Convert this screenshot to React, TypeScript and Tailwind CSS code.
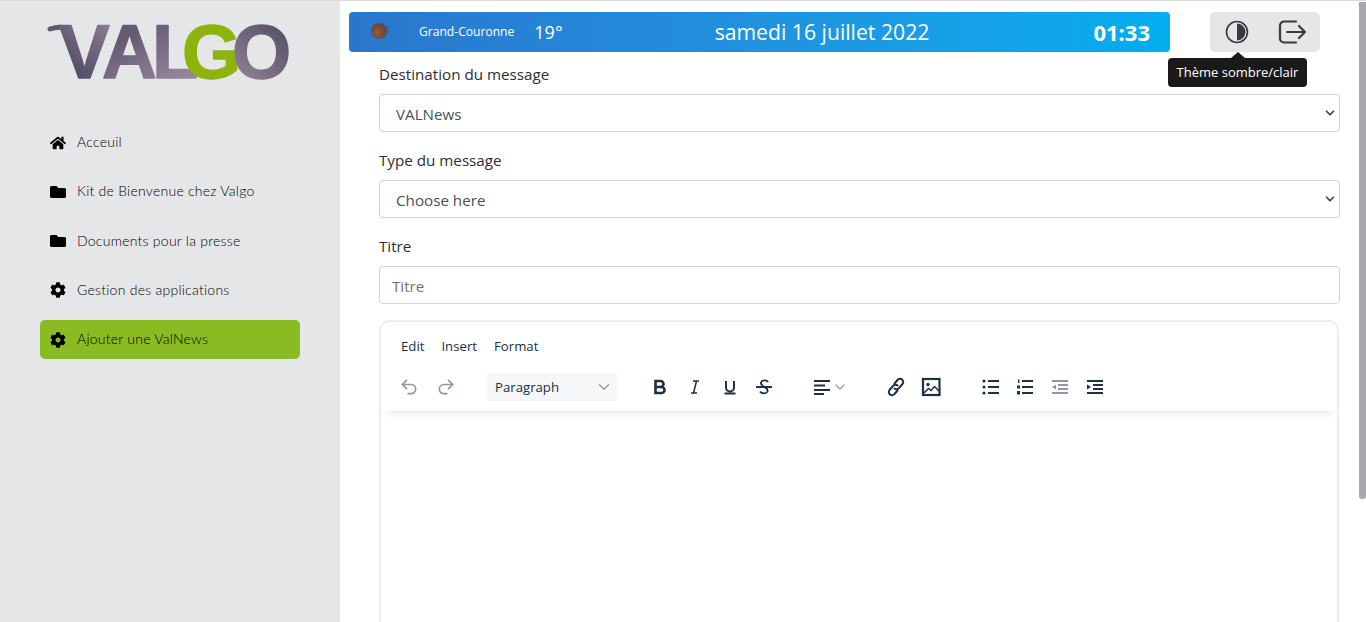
import { ChevronDown, Redo2, Undo2 } from "lucide-react";
import { FaCog, FaFolder, FaHome } from "react-icons/fa";
import type { ReactNode } from "react";

const menu = [
    { label: "Acceuil", icon: <FaHome size={16} /> },
    { label: "Kit de Bienvenue chez Valgo", icon: <FaFolder size={16} /> },
    { label: "Documents pour la presse", icon: <FaFolder size={16} /> },
    { label: "Gestion des applications", icon: <FaCog size={16} /> },
    { label: "Ajouter une ValNews", icon: <FaCog size={16} />, active: true },
];

function Logo() {
    return (
        <svg width="250" height="62" viewBox="0 0 250 62" className="ml-[47px] mt-[21px] overflow-visible">
            <defs>
                <linearGradient id="logoV" gradientUnits="userSpaceOnUse" x1="20" y1="58" x2="70" y2="4">
                    <stop offset="0" stopColor="#4b4660" />
                    <stop offset="1" stopColor="#8d7f93" />
                </linearGradient>
                <linearGradient id="logoL" gradientUnits="userSpaceOnUse" x1="100" y1="4" x2="130" y2="58">
                    <stop offset="0" stopColor="#655c74" />
                    <stop offset="1" stopColor="#94859a" />
                </linearGradient>
                <linearGradient id="logoO" gradientUnits="userSpaceOnUse" x1="195" y1="58" x2="242" y2="6">
                    <stop offset="0" stopColor="#8d7f93" />
                    <stop offset="1" stopColor="#544e66" />
                </linearGradient>
            </defs>
            <path d="M3 7C12 4 20 4 24 12" fill="none" stroke="#5f576f" strokeWidth="5" strokeLinecap="round" />
            <text
                y="56"
                fontFamily="'Liberation Sans', sans-serif"
                fontWeight="700"
                fontSize="76"
                strokeWidth="1.5"
                strokeLinejoin="round"
            >
                <tspan x="12" fill="url(#logoV)" stroke="url(#logoV)">V</tspan>
                <tspan x="55" fill="url(#logoL)" stroke="url(#logoL)">A</tspan>
                <tspan x="105" fill="url(#logoL)" stroke="url(#logoL)">L</tspan>
                <tspan x="135" fill="#8fb30e" stroke="#8fb30e">G</tspan>
                <tspan x="185" fill="url(#logoO)" stroke="url(#logoO)">O</tspan>
            </text>
        </svg>
    );
}

function Sidebar() {
    return (
        <aside className="flex h-full w-[340px] shrink-0 flex-col bg-[#e5e6e8]">
            <Logo />
            <nav className="mt-[39px] flex flex-col gap-[10.25px] px-[40px] font-['Lato',sans-serif] text-[14px] font-light text-black">
                {menu.map((item) => (
                    <div
                        key={item.label}
                        className={`flex h-[39px] items-center gap-[11px] rounded-[5px] pl-[10px] ${item.active ? "bg-[#8abb22]" : ""}`}
                    >
                        <span className="flex w-[16px] justify-center text-black">{item.icon}</span>
                        <span className="pb-[2px] tracking-[0.25px]">{item.label}</span>
                    </div>
                ))}
            </nav>
        </aside>
    );
}

function WeatherIcon() {
    return (
        <svg width="24" height="20" viewBox="0 0 24 20" className="mb-[3px]">
            <defs>
                <radialGradient id="ball" cx="0.4" cy="0.6" r="0.65">
                    <stop offset="0" stopColor="#8f5c3a" />
                    <stop offset="1" stopColor="#5c4436" />
                </radialGradient>
            </defs>
            <circle cx="10" cy="10" r="8" fill="url(#ball)" />
            <circle cx="18.500" cy="6" r="1" fill="#5a3f30" opacity="0.7" />
            <circle cx="19" cy="11" r="1" fill="#5a3f30" opacity="0.5" />
        </svg>
    );
}

function TopBar() {
    return (
        <div className="flex items-start pl-[9px] pt-[11px]">
            <div className="flex h-[40px] w-[821px] items-center rounded-[4px] bg-gradient-to-r from-[#2a76cd] to-[#03aeef] text-white">
                <div className="ml-[20px] w-[50px]">
                    <WeatherIcon />
                </div>
                <span className="text-[12.1px]">Grand-Couronne</span>
                <span className="ml-[20px] text-[18px]">19°</span>
                <span className="ml-[152px] text-[21.2px]">samedi 16 juillet 2022</span>
                <span className="ml-auto mr-[20px] text-[22px] font-bold">01:33</span>
            </div>
            <div className="relative ml-[40px] flex h-[40px] w-[110px] items-center rounded-[5px] bg-[#e5e6e8] text-[#3a3a3e]">
                <svg width="24" height="24" viewBox="0 0 24 24" className="ml-[15px]">
                    <circle cx="12" cy="12" r="10.5" fill="none" stroke="currentColor" strokeWidth="1.6" />
                    <path d="M12 3.500a8.500 8.500 0 0 1 0 17z" fill="currentColor" />
                </svg>
                <svg width="30" height="26" viewBox="0 0 30 26" className="ml-[29px]" fill="none" stroke="currentColor" strokeWidth="2.2" strokeLinecap="round" strokeLinejoin="round">
                    <path d="M18 2.500H6a4 4 0 0 0-4 4v13a4 4 0 0 0 4 4h12" />
                    <path d="M9 13h18M21 7l6 6-6 6" />
                </svg>
                <div className="absolute left-[-42px] top-[46px] flex h-[29px] w-[139px] items-center justify-center rounded-[4px] bg-[#1a1a1a] text-[13px] text-white">
                    <span className="absolute left-[63px] top-[-6px] h-0 w-0 border-x-[7px] border-b-[6px] border-x-transparent border-b-[#1a1a1a]" />
                    Thème sombre/clair
                </div>
            </div>
        </div>
    );
}

function Field({ label, children }: { label: string; children: ReactNode }) {
    return (
        <div className="flex flex-col">
            <label className="mb-[8px] h-[24px] text-[15.2px] leading-[24px] text-[#2a2e33]">{label}</label>
            {children}
        </div>
    );
}

function SelectBox({ value }: { value: string }) {
    return (
        <div className="relative">
            <select
                defaultValue={value}
                className="h-[38px] w-full appearance-none rounded-[4px] border border-[#ced4da] bg-white pl-[16px] pt-[2px] text-[15.2px] text-[#495057]"
            >
                <option>{value}</option>
            </select>
            <ChevronDown size={14} strokeWidth={3} className="absolute right-[3px] top-[12px] text-[#444]" />
        </div>
    );
}

const ink = "#222f3e";

function ListLines({ muted }: { muted?: boolean }) {
    const fill = muted ? "#9097a0" : ink;
    return (
        <>
            <rect x="6" y="1" width="11" height="2" fill={fill} />
            <rect x="6" y="7" width="11" height="2" fill={fill} />
            <rect x="6" y="13" width="11" height="2" fill={fill} />
        </>
    );
}

function EditorToolbar() {
    return (
        <div className="relative z-10 h-[89px] rounded-t-[8px] shadow-[0_7px_7px_-5px_rgba(34,47,62,0.12)]">
            <div className="flex gap-[17px] pl-[20px] pt-[14px] text-[13.2px] leading-[20px] text-[#222f3e]">
                <span>Edit</span>
                <span>Insert</span>
                <span>Format</span>
            </div>
            <div className="mt-[17px] flex h-[28px] items-center pl-[18px]" style={{ color: ink }}>
                <Undo2 size={20} strokeWidth={2} className="text-[#91979f]" />
                <Redo2 size={20} strokeWidth={2} className="ml-[17px] text-[#91979f]" />
                <div className="ml-[31px] flex h-[28px] w-[130px] items-center justify-between rounded-[3px] bg-[#f5f6f7] pl-[8px] pr-[4px] pt-[2px] text-[13.2px]">
                    Paragraph
                    <ChevronDown size={18} strokeWidth={1.6} className="mb-[2px] text-[#91979f]" />
                </div>
                {/* B I U S */}
                <svg width="16" height="16" viewBox="0 0 16 16" className="ml-[35px]" fill="none" stroke={ink} strokeWidth="2.6">
                    <path d="M3.500 2h5a3 3 0 0 1 0 6h-5zM3.500 8h6a3 3 0 0 1 0 6h-6z" />
                </svg>
                <svg width="16" height="16" viewBox="0 0 16 16" className="ml-[19px]" fill="none" stroke={ink} strokeWidth="1.5">
                    <path d="M6 2h6M4 14h6M9.500 2 6.500 14" />
                </svg>
                <svg width="16" height="16" viewBox="0 0 16 16" className="ml-[19px]" fill="none" stroke={ink} strokeWidth="2">
                    <path d="M4 2v6.500a4 4 0 0 0 8 0V2M2.500 14.500h11" />
                </svg>
                <svg width="18" height="18" viewBox="0 0 18 18" className="ml-[17px]" fill="none" stroke={ink} strokeWidth="1.9">
                    <path d="M13 4c-1-2-6-2.500-7 .5-.7 2.500 2 3.500 3.500 4.500 2 1 3.500 2 3 4.500-1 2.500-6 2.500-7.500 0M1 9h16" />
                </svg>
                <div className="ml-[41px] flex items-center">
                    <svg width="18" height="16" viewBox="0 0 18 16" fill={ink}>
                        <rect x="0" y="1" width="16" height="2" />
                        <rect x="0" y="5.500" width="11" height="2" />
                        <rect x="0" y="10" width="16" height="2" />
                        <rect x="0" y="14" width="10" height="2" />
                    </svg>
                    <ChevronDown size={16} strokeWidth={1.8} className="text-[#91979f]" />
                </div>
                <svg width="20" height="20" viewBox="0 0 20 20" className="ml-[38px]" fill="none" stroke={ink} strokeWidth="2" strokeLinecap="round">
                    <path d="M8.500 6.500 11.500 3a3.200 3.200 0 0 1 5 4l-3.500 4a3 3 0 0 1-4.500.5" />
                    <path d="M11.500 13.500 8.500 17a3.200 3.200 0 0 1-5-4L7 9a3 3 0 0 1 4.500-.5" />
                </svg>
                <svg width="20" height="20" viewBox="0 0 20 20" className="ml-[15px]" fill="none" stroke={ink}>
                    <rect x="2" y="2" width="16.500" height="16" strokeWidth="2.200" />
                    <circle cx="7" cy="7.500" r="1.700" fill={ink} stroke="none" />
                    <path d="M3 16 7.500 11.500 10 13.500 13.500 9.500 18 14" strokeWidth="1.500" />
                </svg>
                <svg width="18" height="16" viewBox="0 0 18 16" className="ml-[41px]" fill={ink}>
                    <circle cx="2" cy="2" r="1.600" />
                    <circle cx="2" cy="8" r="1.600" />
                    <circle cx="2" cy="14" r="1.600" />
                    <ListLines />
                </svg>
                <svg width="18" height="16" viewBox="0 0 18 16" className="ml-[16px]" fill={ink}>
                    <rect x="2" y="0.500" width="1.400" height="3.500" />
                    <rect x="1" y="6.500" width="3" height="3" />
                    <rect x="1" y="12" width="3" height="3.500" />
                    <ListLines />
                </svg>
                <svg width="18" height="16" viewBox="0 0 18 16" className="ml-[17px]" fill="#9097a0">
                    <rect x="1" y="1" width="16" height="2" />
                    <rect x="7" y="5" width="10" height="2" />
                    <rect x="7" y="9" width="10" height="2" />
                    <rect x="1" y="13" width="16" height="2" />
                    <path d="M5 5.500v5L1 8z" />
                </svg>
                <svg width="18" height="16" viewBox="0 0 18 16" className="ml-[17px]" fill={ink}>
                    <rect x="1" y="1" width="16" height="2" />
                    <rect x="7" y="5" width="10" height="2" />
                    <rect x="7" y="9" width="10" height="2" />
                    <rect x="1" y="13" width="16" height="2" />
                    <path d="M1 5.500v5L5 8z" />
                </svg>
            </div>
        </div>
    );
}

export default function App() {
    return (
        <div className="flex h-[622px] w-[1366px] flex-col overflow-hidden bg-white font-['Open_Sans',sans-serif]">
            <div className="h-[1px] shrink-0 bg-[#dcdcdc]" />
            <div className="flex min-h-0 flex-1">
                <Sidebar />
                <main className="min-w-0 flex-1">
                    <TopBar />
                    <div className="ml-[39px] flex w-[961px] flex-col gap-[16px] pt-[10px]">
                        <Field label="Destination du message">
                            <SelectBox value="VALNews" />
                        </Field>
                        <Field label="Type du message">
                            <SelectBox value="Choose here" />
                        </Field>
                        <Field label="Titre">
                            <input
                                placeholder="Titre"
                                className="h-[38px] rounded-[4px] border border-[#ced4da] pl-[12px] pt-[1px] text-[15.2px] text-[#495057] placeholder:text-[#6c757d]"
                            />
                        </Field>
                        <div className="h-[400px] w-[960px] rounded-[10px] border-2 border-[#eeeeee]">
                            <EditorToolbar />
                        </div>
                    </div>
                </main>
                <div className="w-[7px] shrink-0 pt-[1px]">
                    <div className="h-[497px] rounded-b-[3px] bg-[#a8a9ad]" />
                </div>
            </div>
        </div>
    );
}
